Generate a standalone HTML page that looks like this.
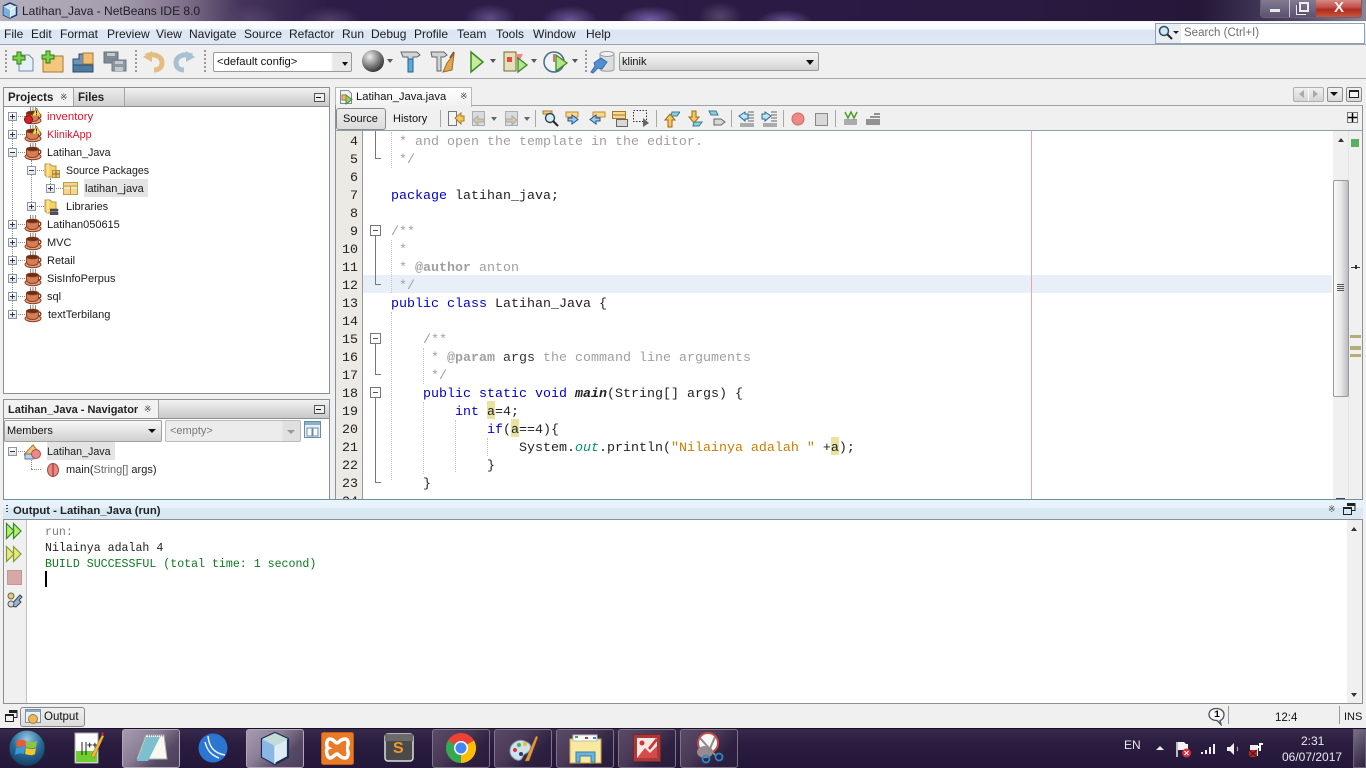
<!DOCTYPE html>
<html><head><meta charset="utf-8"><title>Latihan_Java - NetBeans IDE 8.0</title>
<style>
html,body{margin:0;padding:0;width:1366px;height:768px;overflow:hidden;background:#f0f0f0}
body{position:relative;font:11px/16px "Liberation Sans",sans-serif;color:#1a1a1a}
.a,.t,svg,.c{position:absolute}
.t{white-space:nowrap}
.m{top:26px;font-size:12px;line-height:16px;color:#1c1c1c}
.tr{font-size:11px;line-height:18px;color:#1a1a1a;margin-top:1px}
.b{font-weight:bold;font-size:11.5px;line-height:18px;color:#222;margin-top:1px}
.c{left:391px;font:13.33px/18px "Liberation Mono",monospace;color:#222;white-space:pre;margin-top:2px}
.k{color:#0000c8}.g{color:#a0a0a0}.gb{color:#a0a0a0;font-weight:bold}.s{color:#ce7b00}
.o{color:#009966;font-style:italic}.h{background:#e8e4a0;box-shadow:0 -3px 0 #e8e4a0;display:inline-block;height:15px;line-height:18px;vertical-align:top}
.n{left:336px;width:22px;text-align:right;font:13.33px/18px "Liberation Mono",monospace;color:#222;margin-top:2px}
.f{left:370px;width:9px;height:9px;border:1px solid #777;background:#fff}
.f:after{content:"";position:absolute;left:2px;top:4px;width:5px;height:1px;background:#555}
.v{width:1px;background:#777}
.d{width:0;border-left:1px dotted #c4c4c4}
.o1{font:11.6px/16px "Liberation Mono",monospace;left:45px;margin-top:1px}
.pm{width:7px;height:7px;border:1px solid #8a98a4;background:linear-gradient(#fff,#dde2e6)}
.pm:before{content:"";position:absolute;left:1px;top:3px;width:5px;height:1px;background:#334}
.pm.p:after{content:"";position:absolute;left:3px;top:1px;width:1px;height:5px;background:#334}
.dv{width:0;border-left:1px dotted #888}
.dh{height:0;border-top:1px dotted #888}
.sep{width:1px;background:#a8a8a8;top:110px;height:17px}
.grip{width:2px;height:24px;top:50px;background:repeating-linear-gradient(#999 0 2px,transparent 2px 4px)}
.tb{top:729px;height:37px;width:56px;border:1px solid #7e7488;border-radius:3px;background:linear-gradient(135deg,#5a4a68 0,#4a3a58 40%,#2e2040 70%,#2a1c3c 100%)}
.tb.on{background:linear-gradient(135deg,#a69cb0 0,#8a7e96 40%,#574a66 70%,#4a3e5a 100%);border-color:#b0a8b8}
.arr{width:0;height:0;border-left:3px solid transparent;border-right:3px solid transparent;border-top:4px solid #555}
</style></head><body>
<svg width="0" height="0" style="position:absolute"><defs>
<symbol id="cup" viewBox="0 0 18 18"><path d="M6.500 0v4M9 0v4M11.500 0v4" stroke="#8e8e8e" fill="none"/><ellipse cx="9" cy="13.500" rx="8" ry="3.200" fill="#e6a484" stroke="#8d3f22"/><path d="M2.500 6h12v4c0 3.500-2.500 4.500-6 4.500s-6-1-6-4.500z" fill="#d27f58" stroke="#8d3f22"/><ellipse cx="8.500" cy="6" rx="6" ry="2" fill="#6e2c12" stroke="#8d3f22" stroke-width=".6"/><path d="M14.500 7c3 0 3 3.500 0 4" fill="none" stroke="#8d3f22" stroke-width="1.500"/></symbol>
<symbol id="warn" viewBox="0 0 9 8"><path d="M4.500 0L9 8H0z" fill="#ffd84a" stroke="#77642a" stroke-width=".6"/><path d="M4.500 2.500v3M4.500 6.300v1" stroke="#222"/></symbol>
<symbol id="fold" viewBox="0 0 18 18"><path d="M1 3h5l2 2h4v11H3L1 14z" fill="#f5d266" stroke="#b79646"/><path d="M4 3v11l-1 2" fill="none" stroke="#fff2c4"/></symbol>
<symbol id="ar" viewBox="0 0 18 16"><path d="M1 2h12v5H1z" fill="#f6d890" stroke="#c08a30"/><path d="M5 11h4V8l6 4.500-6 4.500v-3H5z" fill="#9cc8ec" stroke="#20558c" transform="translate(-2 -3)"/></symbol>
<symbol id="ar2" viewBox="0 0 18 16"><path d="M5 2h12v5H5z" fill="#f6d890" stroke="#c08a30"/><path d="M12 8H8V5L2 9.500 8 14v-3h4z" fill="#9cc8ec" stroke="#20558c"/></symbol>
</defs></svg>

<!-- TITLE BAR -->
<div class="a" style="left:0;top:0;width:1366px;height:21px;background:radial-gradient(ellipse 26px 14px at 490px 18px,#5c4c84,transparent),radial-gradient(ellipse 28px 14px at 570px 20px,#6a5698,transparent),radial-gradient(ellipse 32px 14px at 650px 20px,#7560a6,transparent),radial-gradient(ellipse 22px 14px at 720px 16px,#534568,transparent),radial-gradient(ellipse 28px 12px at 785px 22px,#6a5698,transparent),radial-gradient(ellipse 30px 16px at 250px 20px,#54426c,transparent),radial-gradient(ellipse 30px 14px at 330px 20px,#513f68,transparent),linear-gradient(90deg,#b5b0bd 0,#a49cad 120px,#7e6f8a 185px,#45345a 240px,#2d1c47 330px,#2a1a42 1000px,#241738 1200px,#4c4462 1290px,#8a8496 1366px)"></div>
<svg style="left:2px;top:2px" width="16" height="17" viewBox="0 0 16 17"><path d="M8 1l6.500 3v9L8 16l-6.500-3V4z" fill="#cfe5f4" stroke="#173a66" stroke-width="1.500"/><path d="M8 8v8M8 8l6.500-4M8 8L1.500 4" stroke="#fff" fill="none"/><path d="M8 8L1.500 4v9L8 16z" fill="#7cb0dc"/></svg>
<div class="t" style="left:22px;top:3px;font-size:12px;color:#1e1e24">Latihan_Java - NetBeans IDE 8.0</div>
<div class="a" style="left:1260px;top:-1px;width:102px;height:19px;border:1px solid #6a6078;border-top:0;border-radius:0 0 4px 4px;box-sizing:border-box;overflow:hidden;background:linear-gradient(#857c92,#5c5270)">
<div class="a" style="left:28px;top:0;width:1px;height:18px;background:#c9c4d0"></div>
<div class="a" style="left:55px;top:0;width:46px;height:18px;background:linear-gradient(#d9918c 0,#c2504a 45%,#b02a1e 60%,#c65a3e 100%)"></div>
<div class="a" style="left:9px;top:10px;width:10px;height:3px;background:#e8e8ee"></div>
<div class="a" style="left:38px;top:3px;width:6px;height:6px;border:2px solid #eee;box-shadow:-2px 2px 0 0 #5c5270,-3px 3px 0 0 #eee"></div>
<div class="t" style="left:73px;top:0;font:bold 15px/17px 'Liberation Sans',sans-serif;color:#f4f4f4">X</div></div>
<div class="a" style="left:0;top:21px;width:1366px;height:1px;background:#f4f4f6"></div>

<!-- MENU -->
<div class="a" style="left:0;top:22px;width:1366px;height:23px;border-bottom:1px solid #9aa3ad;box-sizing:border-box;background:linear-gradient(#fbfcfe 0,#f8fafc 30%,#dbe5f4 38%,#dfe8f5 100%)"></div>
<div class="t m" style="left:4px">File</div><div class="t m" style="left:31px">Edit</div><div class="t m" style="left:60px">Format</div><div class="t m" style="left:107px">Preview</div><div class="t m" style="left:156px">View</div><div class="t m" style="left:189px">Navigate</div><div class="t m" style="left:244px">Source</div><div class="t m" style="left:289px">Refactor</div><div class="t m" style="left:342px">Run</div><div class="t m" style="left:371px">Debug</div><div class="t m" style="left:414px">Profile</div><div class="t m" style="left:457px">Team</div><div class="t m" style="left:496px">Tools</div><div class="t m" style="left:533px">Window</div><div class="t m" style="left:586px">Help</div>
<div class="a" style="left:1155px;top:23px;width:208px;height:19px;border:1px solid #8ea2b6;background:#fff"></div>
<div class="a" style="left:1156px;top:24px;width:25px;height:19px;background:#eaeef2"></div>
<svg style="left:1158px;top:25px" width="22" height="16" viewBox="0 0 22 16"><circle cx="6" cy="6" r="4.500" fill="#cfe6f4" stroke="#334a5c" stroke-width="1.500"/><path d="M9.500 9.500L14 14" stroke="#222" stroke-width="2"/><path d="M15 6h6l-3 3z" fill="#222"/></svg>
<div class="t" style="left:1184px;top:25px;font-size:11.5px;color:#6d6d6d">Search (Ctrl+I)</div>

<!-- TOOLBAR -->
<div class="a" style="left:0;top:78px;width:1366px;height:1px;background:#a9a9a9"></div>
<div class="a grip" style="left:5px"></div><div class="a grip" style="left:135px"></div><div class="a grip" style="left:204px"></div><div class="a grip" style="left:585px"></div>
<svg style="left:12px;top:50px" width="24" height="24" viewBox="0 0 24 24"><path d="M7 5h10l4 4v12H7z" fill="#e6f0f8" stroke="#6f8ea6"/><path d="M1 6h4V2h4v4h4v4H9v4H5v-4H1z" fill="#7ed24a" stroke="#2c7a1a"/></svg>
<svg style="left:41px;top:50px" width="24" height="24" viewBox="0 0 24 24"><path d="M2 6h20v16H2z" fill="#f3c87c" stroke="#a67a30"/><path d="M1 5h4V1h4v4h4v4H9v4H5V9H1z" fill="#7ed24a" stroke="#2c7a1a"/></svg>
<svg style="left:72px;top:50px" width="24" height="24" viewBox="0 0 24 24"><path d="M1 9h6V4h7v18H1z" fill="#6c94b8" stroke="#2c4c6c"/><path d="M1 15h20v7H1z" fill="#4f7aa0" stroke="#2c4c6c"/><path d="M11 3h10v11H11z" fill="#f0bd74" stroke="#a57a38"/></svg>
<svg style="left:103px;top:50px" width="24" height="24" viewBox="0 0 24 24"><path d="M1 2h14v11H1z" fill="#7f8a94" stroke="#6a747e"/><path d="M9 10h14v11H9z" fill="#8e98a0" stroke="#6e7880"/><path d="M4 3h8v3H4zM12 11h8v3h-8zM12 17h8v4h-8z" fill="#c4cad0"/></svg>
<svg style="left:142px;top:50px" width="24" height="24" viewBox="0 0 24 24"><path d="M4 6c8-3 16 0 16 7 0 5-4 7-8 7" fill="none" stroke="#e4bd82" stroke-width="5"/><path d="M1 7l9-6v11z" fill="#e4bd82"/></svg>
<svg style="left:172px;top:50px" width="24" height="24" viewBox="0 0 24 24"><path d="M20 6c-8-3-16 0-16 7 0 5 4 7 8 7" fill="none" stroke="#a8c0d0" stroke-width="5"/><path d="M23 7l-9-6v11z" fill="#a8c0d0"/></svg>
<div class="a" style="left:213px;top:52px;width:137px;height:18px;border:1px solid #9a9a9a;border-radius:2px;background:linear-gradient(90deg,#fff 0,#fff 117px,#e8e8e8 119px)"></div>
<div class="t" style="left:217px;top:54px;font-size:11.3px;color:#111">&lt;default config&gt;</div>
<div class="a arr" style="left:342px;top:62px;border-top-color:#111"></div>
<svg style="left:361px;top:49px" width="24" height="24" viewBox="0 0 24 24"><defs><radialGradient id="gl" cx=".35" cy=".3" r=".8"><stop offset="0" stop-color="#eee"/><stop offset=".5" stop-color="#888"/><stop offset="1" stop-color="#222"/></radialGradient></defs><circle cx="12" cy="12" r="11" fill="url(#gl)"/></svg>
<div class="a arr" style="left:387px;top:59px"></div>
<svg style="left:400px;top:50px" width="22" height="24" viewBox="0 0 22 24"><path d="M1 2h16l3 3-3 2H13v4H8V7H3z" fill="#d0d4d8" stroke="#666"/><path d="M8 9h5v13H8z" fill="#5aa8dc" stroke="#24628e"/></svg>
<svg style="left:430px;top:50px" width="26" height="24" viewBox="0 0 26 24"><path d="M1 2h13l3 3-3 2h-3v14H7V7H2z" fill="#d0d4d8" stroke="#666"/><path d="M24 4l-7 9-4 9 9-2z" fill="#e0a850" stroke="#9a6a28"/><path d="M20 8l4-6" stroke="#8a5a2a" stroke-width="2"/></svg>
<svg style="left:469px;top:50px" width="16" height="24" viewBox="0 0 16 24"><path d="M2 2l12 10L2 22z" fill="#c8ea9a" stroke="#3a8a24" stroke-width="1.500"/></svg>
<div class="a arr" style="left:490px;top:59px"></div>
<svg style="left:503px;top:50px" width="26" height="24" viewBox="0 0 26 24"><path d="M1 2h12v19H1z" fill="#e6e0b4" stroke="#6a6a4a"/><path d="M4 7h5v5H4z" fill="#e84a4a"/><path d="M13 4h7l-3 6h-4z" fill="#f08a8a"/><path d="M15 8l9 7-9 7z" fill="#b6e48a" stroke="#3a8a24" stroke-width="1.300"/></svg>
<div class="a arr" style="left:531px;top:59px"></div>
<svg style="left:543px;top:50px" width="26" height="24" viewBox="0 0 26 24"><circle cx="11" cy="12" r="10" fill="#eef4f8" stroke="#4a6a88" stroke-width="1.500"/><path d="M11 4v8" stroke="#d84a2a" stroke-width="1.500"/><path d="M13 5l11 8-11 8z" fill="#b6e48a" stroke="#3a8a24" stroke-width="1.300"/></svg>
<div class="a arr" style="left:572px;top:59px"></div>
<svg style="left:590px;top:50px" width="26" height="24" viewBox="0 0 26 24"><path d="M10 4c0-3 14-3 14 0v15c0 3-14 3-14 0z" fill="#dcdfe2" stroke="#9aa0a6"/><ellipse cx="17" cy="4" rx="7" ry="2.500" fill="#f2f2f2" stroke="#9aa0a6"/><path d="M1 22l4-6-1-3 7-5 6 4-5 7-4-1-5 5z" fill="#4f8fd2" stroke="#3a70a8"/></svg>
<div class="a" style="left:619px;top:52px;width:198px;height:17px;border:1px solid #9a9a9a;border-radius:2px;background:linear-gradient(#f6f6f6,#d2d2d2)"></div>
<div class="t" style="left:622px;top:54px;font-size:11px;color:#111">klinik</div>
<div class="a arr" style="left:806px;top:60px;border-top-color:#111;border-width:5px 4px 0 4px"></div>

<!-- PROJECTS PANEL -->
<div class="a" style="left:3px;top:87px;width:325px;height:305px;border:1px solid #8a9096;background:#fff"></div>
<div class="a" style="left:4px;top:88px;width:325px;height:19px;border-bottom:1px solid #8a9096;box-sizing:border-box;background:linear-gradient(#f2f2f2,#c8c8c8)"></div>
<div class="a" style="left:4px;top:88px;width:69px;height:18px;background:#f2f2f2;border-right:1px solid #a5a5a5"></div>
<div class="a" style="left:74px;top:88px;width:50px;height:18px;background:linear-gradient(#ececec,#d0d0d0);border-right:1px solid #a5a5a5"></div>
<div class="t b" style="left:8px;top:88px">Projects</div><div class="t" style="left:60px;top:89px;font-size:9px;line-height:17px;color:#444">※</div><div class="t b" style="left:78px;top:88px">Files</div>
<div class="a" style="left:314px;top:93px;width:9px;height:7px;border:1px solid #555;background:#eee"></div><div class="a" style="left:316px;top:97px;width:5px;height:1px;background:#111"></div>

<div class="a dv" style="left:12px;top:120px;height:194px"></div><div class="a dv" style="left:31px;top:160px;height:46px"></div><div class="a dv" style="left:50px;top:178px;height:10px"></div>
<div class="a dh" style="left:18px;top:116px;width:7px"></div><div class="a dh" style="left:18px;top:134px;width:7px"></div><div class="a dh" style="left:18px;top:152px;width:7px"></div><div class="a dh" style="left:18px;top:224px;width:7px"></div><div class="a dh" style="left:18px;top:242px;width:7px"></div><div class="a dh" style="left:18px;top:260px;width:7px"></div><div class="a dh" style="left:18px;top:278px;width:7px"></div><div class="a dh" style="left:18px;top:296px;width:7px"></div><div class="a dh" style="left:18px;top:314px;width:7px"></div><div class="a dh" style="left:37px;top:170px;width:7px"></div><div class="a dh" style="left:37px;top:206px;width:7px"></div><div class="a dh" style="left:56px;top:188px;width:7px"></div>
<div class="a pm p" style="left:8px;top:112px"></div><div class="a pm p" style="left:8px;top:130px"></div><div class="a pm" style="left:8px;top:148px"></div><div class="a pm" style="left:27px;top:166px"></div><div class="a pm p" style="left:46px;top:184px"></div><div class="a pm p" style="left:27px;top:202px"></div><div class="a pm p" style="left:8px;top:220px"></div><div class="a pm p" style="left:8px;top:238px"></div><div class="a pm p" style="left:8px;top:256px"></div><div class="a pm p" style="left:8px;top:274px"></div><div class="a pm p" style="left:8px;top:292px"></div><div class="a pm p" style="left:8px;top:310px"></div>

<svg style="left:24px;top:107px" width="18" height="18"><use href="#cup"/></svg><svg style="left:24px;top:125px" width="18" height="18"><use href="#cup"/></svg><svg style="left:24px;top:143px" width="18" height="18"><use href="#cup"/></svg><svg style="left:24px;top:215px" width="18" height="18"><use href="#cup"/></svg><svg style="left:24px;top:233px" width="18" height="18"><use href="#cup"/></svg><svg style="left:24px;top:251px" width="18" height="18"><use href="#cup"/></svg><svg style="left:24px;top:269px" width="18" height="18"><use href="#cup"/></svg><svg style="left:24px;top:287px" width="18" height="18"><use href="#cup"/></svg><svg style="left:24px;top:305px" width="18" height="18"><use href="#cup"/></svg>
<svg style="left:32px;top:108px" width="9" height="8"><use href="#warn"/></svg><svg style="left:32px;top:126px" width="9" height="8"><use href="#warn"/></svg>
<svg style="left:24px;top:115px" width="9" height="9"><circle cx="4.500" cy="4.500" r="4" fill="#d8202a" stroke="#7a1015"/></svg>
<svg style="left:44px;top:161px" width="18" height="18"><use href="#fold"/></svg><svg style="left:52px;top:170px" width="8" height="8"><path d="M0 0h8v8H0zM4 0v8M0 4h8" fill="#e8c878" stroke="#8a6a2a"/></svg>
<svg style="left:63px;top:180px" width="16" height="16"><path d="M.5 2.500h14v12H.5z" fill="#f2d592" stroke="#c49a4c"/><path d="M.5 6h14M7.500 6v8.500" stroke="#c49a4c" fill="none"/><path d="M1 7h6v2H1zM8 7h6v2H8z" fill="#f8e6b8"/></svg>
<svg style="left:44px;top:197px" width="18" height="18"><use href="#fold"/></svg><svg style="left:50px;top:208px" width="9" height="7"><path d="M0 1h8v2H0zM0 4h8v3H0z" fill="#556" stroke="#333" stroke-width=".5"/></svg>

<div class="a" style="left:84px;top:179px;width:64px;height:18px;background:#e4e4e4"></div>
<div class="t tr" style="left:47px;top:107px;color:#e0142a;font-size:11.4px">inventory</div>
<div class="t tr" style="left:47px;top:125px;color:#e0142a;font-size:10.7px">KlinikApp</div>
<div class="t tr" style="left:47px;top:143px;font-size:10.7px">Latihan_Java</div>
<div class="t tr" style="left:66px;top:161px;font-size:10.6px">Source Packages</div>
<div class="t tr" style="left:85px;top:179px">latihan_java</div>
<div class="t tr" style="left:66px;top:197px">Libraries</div>
<div class="t tr" style="left:47px;top:215px">Latihan050615</div>
<div class="t tr" style="left:47px;top:233px">MVC</div>
<div class="t tr" style="left:47px;top:251px">Retail</div>
<div class="t tr" style="left:47px;top:269px">SisInfoPerpus</div>
<div class="t tr" style="left:47px;top:287px">sql</div>
<div class="t tr" style="left:48px;top:305px">textTerbilang</div>

<!-- NAVIGATOR -->
<div class="a" style="left:3px;top:399px;width:325px;height:101px;border-left:1px solid #8a9096;border-right:1px solid #8a9096;border-top:1px solid #8a9096;background:#fff"></div>
<div class="a" style="left:4px;top:400px;width:325px;height:19px;border-bottom:1px solid #8a9096;box-sizing:border-box;background:linear-gradient(#f2f2f2,#c8c8c8)"></div>
<div class="a" style="left:4px;top:400px;width:154px;height:18px;background:#f2f2f2;border-right:1px solid #a5a5a5"></div>
<div class="t b" style="left:8px;top:400px;font-size:11px">Latihan_Java - Navigator</div><div class="t" style="left:144px;top:401px;font-size:9px;line-height:17px;color:#444">※</div>
<div class="a" style="left:314px;top:405px;width:9px;height:7px;border:1px solid #555;background:#eee"></div><div class="a" style="left:316px;top:409px;width:5px;height:1px;background:#111"></div>
<div class="a" style="left:4px;top:420px;width:156px;height:20px;border:1px solid #a0a0a0;border-radius:2px;background:linear-gradient(#f8f8f8,#d0d0d0)"></div>
<div class="t" style="left:7px;top:423px;font-size:11px;color:#111">Members</div>
<div class="a arr" style="left:148px;top:429px;border-top-color:#111;border-width:4px 4px 0 4px"></div>
<div class="a" style="left:165px;top:420px;width:134px;height:20px;border:1px solid #bcbcbc;border-radius:2px;background:linear-gradient(90deg,#ececec 0,#ececec 115px,#e0e0e0 118px)"></div>
<div class="t" style="left:170px;top:423px;font-size:11px;color:#777">&lt;empty&gt;</div>
<div class="a arr" style="left:287px;top:430px;border-top-color:#999;border-width:4px 4px 0 4px"></div>
<svg style="left:304px;top:421px" width="18" height="18"><path d="M.5.500h16v16H.5z" fill="#e8f0f6" stroke="#6a8ca8"/><path d="M1 1h15v3H1z" fill="#8ab0cc"/><path d="M3 7h5v8H3zM9 7h5v8H9z" fill="#fff" stroke="#6a8ca8"/></svg>
<div class="a" style="left:47px;top:442px;width:68px;height:18px;background:#e4e4e4"></div>
<div class="a pm" style="left:8px;top:447px"></div><div class="a dh" style="left:18px;top:451px;width:7px"></div>
<div class="a dv" style="left:31px;top:460px;height:9px"></div><div class="a dh" style="left:31px;top:469px;width:10px"></div>
<svg style="left:24px;top:442px" width="18" height="18"><path d="M.5 12L9 3h0l5 6-5 4H.5z" fill="#f0c878" stroke="#a07a3a"/><path d="M1 12h9v5H1z" fill="#bcd4e8" stroke="#5a7a98"/><circle cx="12" cy="12" r="4.500" fill="#e88a8a" stroke="#b04a4a"/></svg>
<svg style="left:46px;top:462px" width="14" height="16"><ellipse cx="7" cy="8" rx="5.500" ry="6.500" fill="#e88a80" stroke="#a84a44"/><path d="M7 1.500v13" stroke="#8a2a28"/></svg>
<div class="t tr" style="left:47px;top:442px;font-size:10.7px">Latihan_Java</div>
<div class="t tr" style="left:66px;top:460px">main(<span style="color:#666">String[]</span> args)</div>

<!-- EDITOR HEADER -->
<div class="a" style="left:335px;top:87px;width:137px;height:20px;background:linear-gradient(#fff,#f0f0f0);border:1px solid #b8b8b8;border-bottom:0;box-sizing:border-box"></div>
<svg style="left:339px;top:89px" width="15" height="16"><path d="M1.500 1.500h8l3 3v10h-11z" fill="#eef2f6" stroke="#7a8a9a"/><path d="M7 6l6 4.500-6 4.500z" fill="#9ad06a" stroke="#4a8a2a"/><path d="M3 6h4v5H3z" fill="#e8c070" stroke="#a07a30"/></svg>
<div class="t" style="left:356px;top:88px;font-size:11.2px;line-height:18px;color:#111">Latihan_Java.java</div>
<div class="t" style="left:460px;top:88px;font-size:9px;line-height:17px;color:#444">※</div>
<div class="a" style="left:1293px;top:87px;width:29px;height:13px;border:1px solid #b0b0b0;border-radius:2px;background:linear-gradient(#f0f0f0,#d4d4d4)"></div><div class="a" style="left:1308px;top:88px;width:1px;height:13px;background:#fff"></div>
<div class="a" style="left:1299px;top:90px;width:0;height:0;border:4px solid transparent;border-left:0;border-right:5px solid #aaa"></div><div class="a" style="left:1313px;top:90px;width:0;height:0;border:4px solid transparent;border-right:0;border-left:5px solid #aaa"></div>
<div class="a" style="left:1327px;top:87px;width:14px;height:13px;border:1px solid #8e8e8e;border-radius:2px;background:linear-gradient(#f2f2f2,#d8d8d8)"></div><div class="a arr" style="left:1330px;top:92px;border-top-color:#111;border-width:4px 4px 0 4px"></div>
<div class="a" style="left:1346px;top:87px;width:14px;height:13px;border:1px solid #8e8e8e;border-radius:2px;background:linear-gradient(#f2f2f2,#d8d8d8)"></div><div class="a" style="left:1349px;top:90px;width:8px;height:5px;border:1px solid #222;border-top-width:2px;background:#f4f4f4"></div>

<!-- EDITOR TOOLBAR -->
<div class="a" style="left:335px;top:105px;width:1px;height:394px;background:#8e9296"></div>
<div class="a" style="left:1362px;top:105px;width:1px;height:394px;background:#8e9296"></div>
<div class="a" style="left:472px;top:105px;width:890px;height:1px;background:#9ea2a6"></div>
<div class="a" style="left:336px;top:108px;width:48px;height:20px;border:1px solid #8a8a8a;border-radius:3px;background:linear-gradient(#ececec,#dcdcdc)"></div>
<div class="t" style="left:343px;top:111px;font-size:11px;color:#111">Source</div><div class="t" style="left:393px;top:111px;font-size:11px;color:#111">History</div>
<div class="a sep" style="left:440px"></div><div class="a sep" style="left:535px"></div><div class="a sep" style="left:656px"></div><div class="a sep" style="left:731px"></div><div class="a sep" style="left:783px"></div><div class="a sep" style="left:835px"></div>
<svg style="left:447px;top:110px" width="18" height="17"><path d="M1.500 1.500h8v14h-8z" fill="#f4f4f4" stroke="#777"/><path d="M8 8l6-5v3h3v5h-3v3z" fill="#f6c660" stroke="#a87a20"/></svg>
<svg style="left:471px;top:110px" width="15" height="17"><path d="M1.500 1.500h12v14h-12z" fill="#d8dce0" stroke="#a8aeb4"/><path d="M2 10l5-4v3h6v3H7v3z" fill="#d8c8a0" stroke="#aaa"/></svg><div class="a arr" style="left:491px;top:117px;border-top-color:#666"></div>
<svg style="left:504px;top:110px" width="15" height="17"><path d="M1.500 1.500h12v14h-12z" fill="#d8dce0" stroke="#a8aeb4"/><path d="M13 10L8 6v3H2v3h6v3z" fill="#d8c8a0" stroke="#aaa"/></svg><div class="a arr" style="left:524px;top:117px;border-top-color:#666"></div>
<svg style="left:542px;top:110px" width="18" height="18"><path d="M1 1h9v3H1z" fill="#f4c87c" stroke="#b0782c"/><circle cx="8" cy="8" r="4.500" fill="#d8ecf8" stroke="#24485c" stroke-width="1.400"/><path d="M11 11l5 5" stroke="#222" stroke-width="2"/></svg>
<svg style="left:565px;top:110px" width="18" height="16"><use href="#ar"/></svg><svg style="left:588px;top:110px" width="18" height="16"><use href="#ar2"/></svg>
<svg style="left:611px;top:110px" width="18" height="18"><path d="M1.500 1.500h13v7h-13z" fill="#f6d890" stroke="#a8782a"/><path d="M5.500 9.500h11v7h-11z" fill="#d8d8d8" stroke="#666"/><path d="M1.500 5h13" stroke="#a8782a"/></svg>
<svg style="left:633px;top:110px" width="18" height="18"><path d="M.5.500h13v11H.5z" fill="none" stroke="#333" stroke-dasharray="1.500 1.500"/><path d="M10 8l6 5-6 4z" fill="#666"/></svg>
<svg style="left:663px;top:110px" width="17" height="18"><path d="M8 7h8l-3 4H7z" fill="#8acee0" stroke="#3a7a92" transform="translate(1 -5)"/><path d="M7 4l5 6H9v7H5v-7H2z" fill="#f6c660" stroke="#9a6a1a"/></svg>
<svg style="left:686px;top:110px" width="17" height="18"><path d="M6 1h4v6h3l-5 6-5-6h3z" fill="#f6c660" stroke="#9a6a1a"/><path d="M8 12h8l-3 4H7z" fill="#8acee0" stroke="#3a7a92"/></svg>
<svg style="left:708px;top:110px" width="18" height="18"><path d="M1 1h7l2 4H3z" fill="#8acee0" stroke="#3a7a92"/><path d="M6 9h7l4 3-4 3H6z" fill="#d8d8d8" stroke="#666"/></svg>
<svg style="left:738px;top:110px" width="18" height="17"><path d="M2 14h14M2 16h14M10 2h6M10 5h6M10 8h6M10 11h6" stroke="#666"/><path d="M1 6l6-4v2h3v5H7v2z" fill="#bfe4f4" stroke="#2a6a92"/></svg>
<svg style="left:761px;top:110px" width="18" height="17"><path d="M2 14h14M2 16h14M10 2h6M10 5h6M10 8h6M10 11h6" stroke="#666"/><path d="M10 6L4 2v2H1v5h3v2z" fill="#bfe4f4" stroke="#2a6a92"/></svg>
<svg style="left:791px;top:112px" width="14" height="14"><circle cx="7" cy="7" r="6" fill="#ee8a86" stroke="#d06a66"/></svg>
<div class="a" style="left:815px;top:113px;width:11px;height:11px;border:1px solid #888;background:#d8d8d8"></div>
<svg style="left:843px;top:110px" width="16" height="17"><path d="M2 2l3 6 3-6 3 6 3-6" stroke="#4a9a2a" fill="none" stroke-width="1.400"/><path d="M1 10h13M1 12h13M1 14h13" stroke="#666"/></svg>
<svg style="left:865px;top:112px" width="16" height="15"><path d="M9 2h6M5 5h10M1 8h14M1 10h14M1 12h14" stroke="#333"/></svg>
<svg style="left:1347px;top:112px" width="11" height="11"><path d="M.5.500h10v10H.5z" fill="#f4f4f4" stroke="#777"/><path d="M5.500 1v9M1 5.500h9" stroke="#000" stroke-width="1.500"/></svg>
<div class="a" style="left:335px;top:130px;width:1027px;height:1px;background:#8ea0ae"></div>

<!-- EDITOR BODY -->
<div class="a" style="left:336px;top:131px;width:1026px;height:368px;overflow:hidden;background:#fff"></div>
<div class="a" style="left:336px;top:131px;width:26px;height:368px;background:#ebeae4;border-right:1px solid #999"></div>
<div class="a" style="left:363px;top:275px;width:969px;height:18px;background:#e9eff8"></div>
<div class="a" style="left:1031px;top:131px;width:1px;height:368px;background:#e6a6a6"></div>
<div class="a" style="left:1333px;top:131px;width:29px;height:368px;background:#f0f0f0"></div>
<div class="a" style="left:1348px;top:131px;width:1px;height:368px;background:#e4e4e4"></div>
<div class="a" style="left:1333px;top:180px;width:14px;height:215px;border:1px solid #9a9a9a;border-radius:2px;background:linear-gradient(90deg,#fafafa,#e8e8e8 50%,#bcbcc0)"></div>
<div class="a" style="left:1337px;top:284px;width:7px;height:8px;background:repeating-linear-gradient(#555 0 1px,transparent 1px 2px)"></div>
<div class="a" style="left:1338px;top:138px;width:0;height:0;border:3px solid transparent;border-top:0;border-bottom:4px solid #333"></div>
<div class="a" style="left:1336px;top:498px;width:9px;height:1px;background:#445"></div>
<div class="a" style="left:1351px;top:139px;width:8px;height:8px;background:#58b060"></div>
<div class="a" style="left:1351px;top:267px;width:9px;height:1px;background:#333"></div><div class="a" style="left:1355px;top:265px;width:2px;height:4px;background:#333"></div>
<div class="a" style="left:1350px;top:335px;width:11px;height:3px;background:#b5ae74"></div><div class="a" style="left:1350px;top:346px;width:11px;height:4px;background:#b5ae74"></div><div class="a" style="left:1350px;top:354px;width:11px;height:3px;background:#b5ae74"></div>

<div class="a d" style="left:391px;top:132px;height:36px"></div><div class="a d" style="left:391px;top:240px;height:53px"></div><div class="a d" style="left:391px;top:312px;height:168px"></div>
<div class="a d" style="left:423px;top:348px;height:36px"></div><div class="a d" style="left:423px;top:402px;height:72px"></div>
<div class="a d" style="left:455px;top:420px;height:52px"></div><div class="a d" style="left:487px;top:438px;height:18px"></div>

<div class="a v" style="left:375px;top:131px;height:27px"></div><div class="a" style="left:375px;top:158px;width:6px;height:1px;background:#777"></div>
<div class="a f" style="top:225px"></div><div class="a v" style="left:375px;top:236px;height:48px"></div><div class="a" style="left:375px;top:284px;width:6px;height:1px;background:#777"></div>
<div class="a f" style="top:333px"></div><div class="a v" style="left:375px;top:344px;height:30px"></div><div class="a" style="left:375px;top:374px;width:6px;height:1px;background:#777"></div>
<div class="a f" style="top:387px"></div><div class="a v" style="left:375px;top:398px;height:84px"></div><div class="a" style="left:375px;top:482px;width:6px;height:1px;background:#777"></div>

<div class="a n" style="top:132px">4</div><div class="a n" style="top:150px">5</div><div class="a n" style="top:168px">6</div><div class="a n" style="top:186px">7</div><div class="a n" style="top:204px">8</div><div class="a n" style="top:222px">9</div><div class="a n" style="top:240px">10</div><div class="a n" style="top:258px">11</div><div class="a n" style="top:276px">12</div><div class="a n" style="top:294px">13</div><div class="a n" style="top:312px">14</div><div class="a n" style="top:330px">15</div><div class="a n" style="top:348px">16</div><div class="a n" style="top:366px">17</div><div class="a n" style="top:384px">18</div><div class="a n" style="top:402px">19</div><div class="a n" style="top:420px">20</div><div class="a n" style="top:438px">21</div><div class="a n" style="top:456px">22</div><div class="a n" style="top:474px">23</div><div class="a n" style="top:492px">24</div>

<div class="c" style="top:132px"><span class="g"> * and open the template in the editor.</span></div>
<div class="c" style="top:150px"><span class="g"> */</span></div>
<div class="c" style="top:186px"><span class="k">package</span> latihan_java;</div>
<div class="c" style="top:222px"><span class="g">/**</span></div>
<div class="c" style="top:240px"><span class="g"> *</span></div>
<div class="c" style="top:258px"><span class="g"> * <span class="gb">@author</span> anton</span></div>
<div class="c" style="top:276px"><span class="g"> */</span></div>
<div class="c" style="top:294px"><span class="k">public class</span> Latihan_Java {</div>
<div class="c" style="top:330px"><span class="g">    /**</span></div>
<div class="c" style="top:348px"><span class="g">     * <span class="gb">@param</span> <span style="color:#333">args</span> the command line arguments</span></div>
<div class="c" style="top:366px"><span class="g">     */</span></div>
<div class="c" style="top:384px">    <span class="k">public static void</span> <b><i>main</i></b>(String[] args) {</div>
<div class="c" style="top:402px">        <span class="k">int</span> <span class="h">a</span>=4;</div>
<div class="c" style="top:420px">            <span class="k">if</span>(<span class="h">a</span>==4){</div>
<div class="c" style="top:438px">                System.<span class="o">out</span>.println(<span class="s">"Nilainya adalah "</span> +<span class="h">a</span>);</div>
<div class="c" style="top:456px">            }</div>
<div class="c" style="top:474px">    }</div>

<!-- OUTPUT -->
<div class="a" style="left:3px;top:499px;width:1360px;height:21px;border-top:1px solid #6f8ea4;border-bottom:1px solid #8a9096;box-sizing:border-box;background:linear-gradient(#eaf4fb 0,#e6f1f9 40%,#d8e9f4 45%,#d9e9f4 100%)"></div>
<div class="a" style="left:6px;top:505px;width:2px;height:9px;background:repeating-linear-gradient(#444 0 1px,transparent 1px 3px)"></div>
<div class="t b" style="left:13px;top:501px;font-size:11.3px">Output - Latihan_Java (run)</div>
<div class="t" style="left:1328px;top:501px;font-size:9px;line-height:17px;color:#444">※</div>
<svg style="left:1343px;top:503px" width="13" height="12"><path d="M4 .500h8v7H9M.500 4.500h8v7h-8z" fill="none" stroke="#222"/><path d="M4 1h8v2H4zM1 4h8v2H1z" fill="#222"/></svg>
<div class="a" style="left:3px;top:520px;width:1360px;height:183px;border-left:1px solid #8a9096;border-right:1px solid #8a9096;box-sizing:border-box;background:#fff"></div>
<div class="a" style="left:4px;top:520px;width:22px;height:183px;background:#f0f0f0;border-right:1px solid #c4c4c4"></div>
<div class="a" style="left:1347px;top:520px;width:15px;height:183px;background:#f0f0f0"></div>
<div class="a" style="left:1351px;top:527px;width:0;height:0;border:3px solid transparent;border-top:0;border-bottom:4px solid #333"></div>
<div class="a" style="left:1351px;top:693px;width:0;height:0;border:3px solid transparent;border-bottom:0;border-top:4px solid #333"></div>
<svg style="left:5px;top:522px" width="18" height="18"><path d="M1.500 1.500l7.500 7.500-7.500 7.500zM8.500 1.500l7.500 7.500-7.500 7.500z" fill="#b8ec6c" stroke="#2f8a2a" stroke-width="1.200"/></svg>
<svg style="left:5px;top:545px" width="18" height="18"><path d="M1.500 1.500l7.500 7.500-7.500 7.500zM8.500 1.500l7.500 7.500-7.500 7.500z" fill="#e4e88a" stroke="#8a9a2a" stroke-width="1.200"/></svg>
<div class="a" style="left:7px;top:570px;width:13px;height:13px;border:1px solid #c09898;background:#d8a8a8"></div>
<svg style="left:6px;top:591px" width="17" height="18"><circle cx="5" cy="5" r="3" fill="#e8c870" stroke="#665"/><path d="M4 15L14 4l2 2-3 3 2 2-5 5z" fill="#9ab4c8" stroke="#345"/><circle cx="5" cy="13" r="3" fill="#d8d8d8" stroke="#555"/></svg>
<div class="t o1" style="top:524px;color:#7a7a7a">run:</div>
<div class="t o1" style="top:540px;color:#222">Nilainya adalah 4</div>
<div class="t o1" style="top:556px;color:#0a7a1e">BUILD SUCCESSFUL (total time: 1 second)</div>
<div class="a" style="left:45px;top:571px;width:2px;height:16px;background:#000"></div>
<div class="a" style="left:3px;top:703px;width:1360px;height:1px;background:#8a9096"></div>

<!-- STATUS BAR -->
<svg style="left:5px;top:710px" width="13" height="12"><path d="M4 .500h8v7H9M.500 4.500h8v7h-8z" fill="none" stroke="#222"/><path d="M4 1h8v2H4zM1 4h8v2H1z" fill="#222"/></svg>
<div class="a" style="left:20px;top:707px;width:63px;height:18px;border:1px solid #888;border-radius:3px;background:linear-gradient(#f0f0f0,#dcdcdc)"></div>
<svg style="left:25px;top:709px" width="16" height="15"><path d="M.5.500h15v13H.5z" fill="#e8f0f8" stroke="#7a90a6"/><path d="M1 1h14v2H1z" fill="#8aa8c4"/><circle cx="8" cy="10" r="4.500" fill="#eab860" stroke="#a87828"/></svg>
<div class="t" style="left:44px;top:709px;font-size:11.5px;color:#111">Output</div>
<svg style="left:1208px;top:707px" width="18" height="19"><path d="M8.500 1.500c4 0 7.500 2.500 7.500 6s-2 5.500-4 6l1 4-4-4c-4 0-8-2-8-6s3.500-6 7.500-6z" fill="#fbfbfb" stroke="#4a5058" stroke-width="1.300"/></svg>
<div class="t" style="left:1214px;top:708px;font:bold 10px/15px 'Liberation Mono',monospace;color:#000">1</div>
<div class="a" style="left:1228px;top:706px;width:1px;height:18px;background:#999"></div>
<div class="t" style="left:1275px;top:710px;font-size:11.5px;color:#111">12:4</div>
<div class="a" style="left:1339px;top:706px;width:1px;height:18px;background:#999"></div>
<div class="t" style="left:1344px;top:709px;font-size:11px;color:#111">INS</div>

<!-- TASKBAR -->
<div class="a" style="left:0;top:728px;width:1366px;height:40px;border-top:1px solid #1a1024;box-sizing:border-box;background:linear-gradient(#382a4c,#2a1c3e 40%,#24183a)"></div>
<svg style="left:8px;top:729px" width="38" height="38" viewBox="0 0 38 38"><defs><radialGradient id="orb" cx=".5" cy=".25" r=".8"><stop offset="0" stop-color="#9ac8e4"/><stop offset=".5" stop-color="#2a6a9a"/><stop offset="1" stop-color="#123a5c"/></radialGradient></defs><circle cx="19" cy="19" r="18" fill="url(#orb)" stroke="#1a2a3a"/><path d="M9 12c3-2 6-1 9 0l-1 6c-3-1-6-1-9 0z" fill="#f05a28"/><path d="M19 12c3 1 6 2 10 0l-1 6c-3 2-7 1-10 0z" fill="#8cc63e"/><path d="M8 19c3-1 6-1 9 0l-1 6c-3-1-6-1-9 1z" fill="#3a9ad8"/><path d="M18 19c3 1 7 2 10 0l-1 6c-3 2-7 1-10 0z" fill="#f8c820"/></svg>
<svg style="left:74px;top:731px" width="30" height="33" viewBox="0 0 30 33"><path d="M1 2h23v30H1z" fill="#fff" stroke="#aaa"/><path d="M2 20h21v11H2z" fill="#6ed030"/><path d="M8 11v13M12 11v13" stroke="#222" fill="none"/><text x="13" y="17" font-size="9" font-family="Liberation Sans" font-weight="bold" fill="#222">++</text><path d="M17 25L28 4l2 1-10 22z" fill="#f2b634" stroke="#8a6a1a" stroke-width=".5"/><path d="M27 4l1-3 2 1-1 3z" fill="#c22"/></svg>
<div class="a tb on" style="left:122px"></div>
<svg style="left:134px;top:733px" width="34" height="30" viewBox="0 0 34 30"><path d="M12 2h18l3 24H3z" fill="#f8f8f0" stroke="#aaa"/><path d="M12 4h14L14 28H3z" fill="#7cc0d0"/><path d="M14 3h16" stroke="#888" stroke-dasharray="1 1"/></svg>
<svg style="left:198px;top:733px" width="30" height="30"><circle cx="15" cy="15" r="14.500" fill="#2a76d0"/><path d="M10 3c1 10 5 17 17 19M7 9c2 8 6 13 14 16" stroke="#e8f2fc" stroke-width="1.500" fill="none"/></svg>
<div class="a tb on" style="left:246px"></div>
<svg style="left:259px;top:731px" width="32" height="34" viewBox="0 0 32 34"><path d="M16 2l13 6v18l-13 7-13-7V8z" fill="#dcebf4" stroke="#1a2c56" stroke-width="2.200"/><path d="M16 15l13-7-13-6-13 6z" fill="#c4dcd8"/><path d="M3 8l13 7v18L3 26z" fill="#8ab6e4"/><path d="M16 15v18" stroke="#f4f8fc"/></svg>
<svg style="left:321px;top:732px" width="33" height="33"><rect x=".5" y=".5" width="32" height="32" rx="2" fill="#e87a28" stroke="#c25e14"/><path d="M9 7c4 0 5 4 7 4s3-4 8-4 3 9 1 9c2 0 4 10-1 10s-6-4-8-4-4 4-7 4-5-9-2-10C5 15 5 7 9 7z" fill="none" stroke="#fff" stroke-width="3.500"/></svg>
<svg style="left:384px;top:733px" width="31" height="30"><rect x="1" y="1" width="28" height="27" rx="3" fill="#4a4a4a" stroke="#ddd" stroke-width="1.500"/><rect x="1" y="1" width="28" height="7" fill="#6a6a6a"/><text x="9" y="20" font-size="16" font-weight="bold" font-family="Liberation Sans" fill="#f0962a">S</text></svg>
<div class="a tb" style="left:432px"></div>
<svg style="left:446px;top:733px" width="30" height="30" viewBox="0 0 30 30"><circle cx="15" cy="15" r="15" fill="#ea4335"/><path d="M15 15L2 22.500A15 15 0 0 0 15 30z" fill="#34a853"/><path d="M15 15L28 7.500A15 15 0 0 1 15 30z" fill="#fbbc05"/><path d="M15 15L2 22.500A15 15 0 0 1 2 7.500z" fill="#34a853"/><circle cx="15" cy="15" r="7" fill="#fff"/><circle cx="15" cy="15" r="5.500" fill="#4285f4"/></svg>
<div class="a tb" style="left:494px"></div>
<svg style="left:507px;top:731px" width="32" height="34" viewBox="0 0 32 34"><path d="M3 20c0-8 8-12 14-10s8 5 6 9-6 3-7 6-3 5-6 4-7-4-7-9z" fill="#cfe0ec" stroke="#8aa0b4"/><circle cx="8" cy="19" r="2" fill="#c83a3a"/><circle cx="12" cy="14" r="2" fill="#4ab04a"/><circle cx="18" cy="13" r="2" fill="#e8c030"/><circle cx="14" cy="23" r="2" fill="#2a3a6a"/><path d="M18 30L29 5l2 1-9 24z" fill="#e89a3a" stroke="#8a5a1a" stroke-width=".5"/></svg>
<div class="a tb" style="left:556px"></div>
<svg style="left:569px;top:734px" width="33" height="30" viewBox="0 0 33 30"><path d="M1 5h31v24H1z" fill="#f8e8a0" stroke="#c8a850"/><path d="M4 1h24v6H4z" fill="#fff" stroke="#bbb"/><path d="M6 2h3v2H6z" fill="#3ab03a"/><path d="M16 3h3v2h-3z" fill="#c83a3a"/><path d="M24 3h3v2h-3z" fill="#3a8ac8"/><path d="M7 18h19v10h-4v-6H11v6H7z" fill="#6ab4dc" stroke="#3a80a8"/></svg>
<div class="a tb" style="left:618px"></div>
<svg style="left:633px;top:734px" width="28" height="28"><rect x=".5" y=".5" width="27" height="27" fill="#a83a3a" stroke="#7a2424"/><rect x="4" y="4" width="20" height="20" fill="#f8e8e4"/><path d="M4 24l8-10 5 5 7-7v12z" fill="#d84a4a"/><circle cx="9" cy="9" r="2.500" fill="#c83a3a"/><path d="M15 14l8-10 2 2-8 10z" fill="#c83a3a"/></svg>
<div class="a tb" style="left:680px"></div>
<svg style="left:693px;top:732px" width="32" height="32" viewBox="0 0 32 32"><circle cx="15" cy="11" r="10" fill="#f8f8f8" stroke="#c84a4a" stroke-width="2"/><ellipse cx="12" cy="20" rx="8" ry="6" fill="#9a8a90"/><path d="M7 6l16 18M22 5L15 21" stroke="#8a8a8a" stroke-width="2"/><circle cx="13" cy="27" r="3.500" fill="none" stroke="#2a8ac8" stroke-width="1.800"/><circle cx="26" cy="25" r="3.500" fill="none" stroke="#2a8ac8" stroke-width="1.800"/></svg>

<div class="t" style="left:1124px;top:737px;font-size:12px;color:#e8e8f0">EN</div>
<div class="a" style="left:1156px;top:746px;width:0;height:0;border:4px solid transparent;border-top:0;border-bottom:4px solid #eee"></div>
<svg style="left:1176px;top:741px" width="16" height="17"><path d="M1 1v15" stroke="#eee" stroke-width="1.500"/><path d="M2 1h6l2 2h2v6H2z" fill="#f4f4f4"/><circle cx="10.500" cy="12" r="4.500" fill="#d8303a"/><path d="M8.500 10l4 4M12.500 10l-4 4" stroke="#fff"/></svg>
<svg style="left:1200px;top:743px" width="16" height="12"><path d="M1 9h2v2H1zM5 7h2v4H5zM9 4h2v7H9zM13 1h2v10h-2z" fill="#f0f0f0"/></svg>
<svg style="left:1226px;top:742px" width="14" height="14"><path d="M1 5h3l4-4v12L4 9H1z" fill="#eee"/><path d="M11 5c1 1 1 3 0 4" stroke="#bbb" fill="none"/></svg>
<svg style="left:1248px;top:741px" width="16" height="17"><path d="M2 4h8v11H2z" fill="#eee"/><path d="M9 6h3V3l3 0M12 6v4" stroke="#fff" fill="none" stroke-width="2"/><path d="M1 9h8v7H1z" fill="#c82020"/><path d="M1 9l8 7M9 9l-8 7" stroke="#222"/></svg>
<div class="t" style="left:1301px;top:733px;font-size:12px;color:#e8e8f0">2:31</div>
<div class="t" style="left:1282px;top:749px;font-size:12px;color:#e8e8f0">06/07/2017</div>
<div class="a" style="left:1353px;top:729px;width:13px;height:39px;border:1px solid #6a6078;box-sizing:border-box;background:linear-gradient(135deg,#7a7086,#2e2140)"></div>
</body></html>
